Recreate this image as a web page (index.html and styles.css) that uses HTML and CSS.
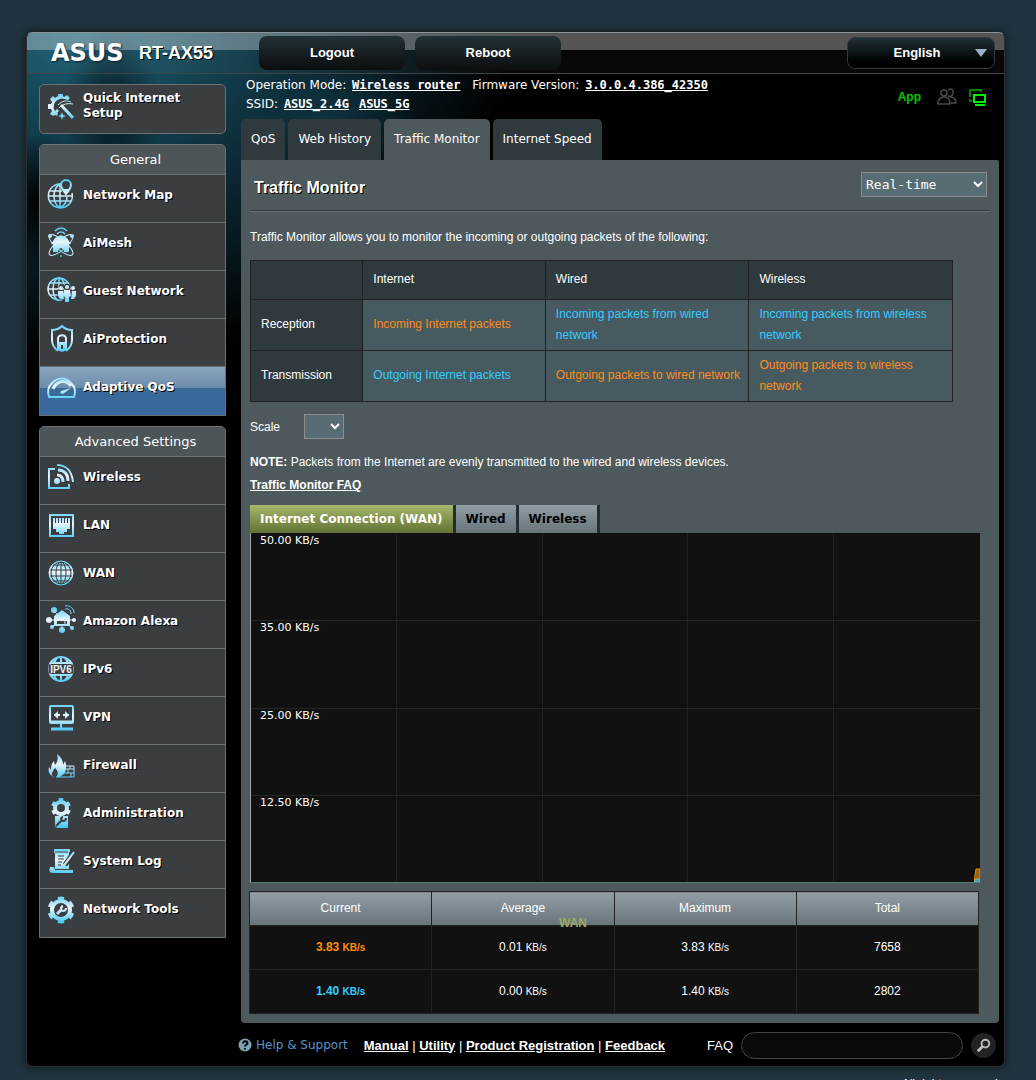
FILE: index.html
```html
<!DOCTYPE html>
<html lang="en">
<head>
  <meta charset="UTF-8" />
  <meta name="viewport" content="width=device-width, initial-scale=1.0" />
  <title>ASUS Wireless Router RT-AX55 - Traffic Monitor</title>
  <link rel="stylesheet" href="styles.css">
</head>
<body>
  <svg class="defs" aria-hidden="true">
    <defs>
      <linearGradient id="ice" gradientUnits="userSpaceOnUse" x1="0" y1="1" x2="0" y2="29">
        <stop offset="0" stop-color="#4cc9f5" />
        <stop offset="0.5" stop-color="#eaf5fb" />
        <stop offset="1" stop-color="#4cc9f5" />
      </linearGradient>
    </defs>
  </svg>

  <div class="container">
    <header class="header">
      <span class="logo">ASUS</span>
      <span class="model">RT-AX55</span>
      <div class="header-buttons">
        <button type="button" class="title-button">Logout</button>
        <button type="button" class="title-button">Reboot</button>
      </div>
      <div class="language">
        <select class="language-select" aria-label="Language">
          <option>English</option>
        </select>
      </div>
    </header>

    <div class="content">
      <nav class="sidebar">
        <a class="quick-setup" href="#">
          <svg class="icon" viewBox="0 0 30 30">
            <path d="M22 9l2-2-3-3-3 2-1-1V3h-5v2L9 7 7 5 4 8l2 3-1 2H2v5h3l1 2-2 3 3 2 2-1 2 1 1-3c-4-2-5-5-4-8 1-5 6-7 10-6z" fill="url(#ice)" />
            <path d="M15 14l12 13" stroke="url(#ice)" stroke-width="3" />
            <path d="M12 14c4-4 8-5 13-3M13 17c4-4 8-5 14-4" fill="none" stroke="url(#ice)" />
            <path d="M16 21l1 3 3 1-3 1-1 3-1-3-3-1 3-1zM11 18l1 1 1 1-1 1-1 1-1-1-1-1 1-1z" fill="url(#ice)" />
          </svg>
          <span>Quick Internet Setup</span>
        </a>

        <div class="menu">
          <div class="menu-title">General</div>
          <a class="menu-item" href="#">
            <svg class="icon line" viewBox="0 0 30 30">
              <path stroke-width="1.500" d="M16 5a12 12 0 1 0 10 9M3 12h13M2 17h25M4 22h22M14 5c-8 5-8 19 0 24M14 5v24M14 29c5-3 7-7 7-11" />
              <path class="hollow" d="M20 15c-4-5-5-7-5-9a5 5 0 0 1 10 0c0 2-1 4-5 9z" />
              <path class="solid" d="M17 10h6l-3 5z" />
            </svg>
            <span>Network Map</span>
          </a>
          <a class="menu-item" href="#">
            <svg class="icon line" viewBox="0 0 30 30">
              <path stroke-width="1.500" d="M9 4c4-4 8-4 12 0M11 7c3-3 5-3 8 0" />
              <ellipse cx="15" cy="18" rx="15" ry="5" transform="rotate(40 15 18)" />
              <ellipse cx="15" cy="18" rx="15" ry="5" transform="rotate(-40 15 18)" />
              <path class="solid" d="M5 17l4-6 6-3 6 3 4 6h-2v8h-5c0-5-6-5-6 0H7v-8z" />
              <circle class="solid" cx="4" cy="9" r="2" />
              <circle class="solid" cx="26" cy="9" r="2" />
              <circle class="solid" cx="15" cy="29" r="1" />
            </svg>
            <span>AiMesh</span>
          </a>
          <a class="menu-item" href="#">
            <svg class="icon line" viewBox="0 0 30 30">
              <g stroke-width="1.500">
                <circle cx="13" cy="14" r="11" />
                <ellipse cx="13" cy="14" rx="6" ry="11" />
                <path d="M13 3v22M2 14h22M4 8h18M4 20h18" />
              </g>
              <g class="cutout">
                <circle cx="15" cy="12" r="2" /><circle cx="21" cy="12" r="3" /><circle cx="27" cy="12" r="2" />
                <path d="M12 15h4v9h-4zM17 15h8v11h-8zM26 15h3v9h-3z" />
              </g>
              <g class="people">
                <circle cx="15" cy="13" r="2" /><circle cx="21" cy="12" r="2" /><circle cx="27" cy="13" r="2" />
                <path d="M12 16h5l1 8h-4l-2-3zM18 15h6l1 6-2 1v5h-4v-5l-2-1zM26 16h4v5l-2 3h-3z" />
              </g>
            </svg>
            <span>Guest Network</span>
          </a>
          <a class="menu-item" href="#">
            <svg class="icon line" viewBox="0 0 30 30">
              <path stroke-width="2" d="M12 28c-4-3-6-6-6-11V7c4 0 7-1 10-4 3 3 6 4 10 4v10c0 5-2 8-6 11" />
              <path stroke-width="2" d="M12 19v-3c0-5 8-5 8 0v3" />
              <path class="solid" fill-rule="evenodd" d="M11 19h10v8l-5 2-5-2zM15 22v4h2v-4z" />
            </svg>
            <span>AiProtection</span>
          </a>
          <a class="menu-item active" href="#">
            <svg class="icon line" viewBox="0 0 30 30">
              <path stroke-width="2" d="M3 26c-2-6 0-11 3-14 6-6 14-6 19 0 4 4 5 9 3 14z" />
              <path stroke-width="3" d="M7 18c4-9 13-10 18-3" />
              <path class="solid" d="M25 17l-8 6-3-1 1-2z" />
            </svg>
            <span>Adaptive QoS</span>
          </a>
        </div>

        <div class="menu">
          <div class="menu-title">Advanced Settings</div>
          <a class="menu-item" href="#">
            <svg class="icon line" viewBox="0 0 30 30">
              <path stroke-width="2" d="M9 8H3v19h20v-4" />
              <path stroke-width="3" d="M12 9c6 0 10 4 10 11M11 14c4 0 6 3 6 7" />
              <path stroke-width="2" d="M11 4c9 0 15 6 16 17" />
              <circle class="solid" cx="11" cy="20" r="3" />
            </svg>
            <span>Wireless</span>
          </a>
          <a class="menu-item" href="#">
            <svg class="icon line" viewBox="0 0 30 30">
              <rect stroke-width="2" x="4" y="6" width="23" height="21" />
              <path class="solid" fill-rule="evenodd" d="M7 9h17v11h-3v3h-3v2h-5v-2h-3v-3H7zM9 9v5h1V9zM12 9v5h1V9zM15 9v5h1V9zM18 9v5h1V9zM21 9v5h1V9z" />
            </svg>
            <span>LAN</span>
          </a>
          <a class="menu-item" href="#">
            <svg class="icon" viewBox="0 0 30 30">
              <circle cx="15" cy="16" r="12" fill="url(#ice)" />
              <g fill="none" stroke="#3a3e40">
                <ellipse cx="15" cy="16" rx="5" ry="11" />
                <ellipse cx="15" cy="16" rx="10" ry="11" />
                <path d="M15 4v24M3 13h24M3 19h24M6 8h18M6 24h18" />
              </g>
              <circle cx="15" cy="16" r="12" fill="none" stroke="url(#ice)" />
            </svg>
            <span>WAN</span>
          </a>
          <a class="menu-item" href="#">
            <svg class="icon line" viewBox="0 0 30 30">
              <path class="solid" fill-rule="evenodd" d="M8 11l8-6 8 6v10H8zM11 16v3h10v-3z" />
              <path d="M3 15h5M23 15h5M8 6l3 3M6 22l4-4M21 19l5 4M16 21v3M19 14v5M19 4c4-1 6 2 6 5M19 1c6-1 9 3 9 7" />
              <circle class="solid" cx="3" cy="15" r="3" />
              <circle class="solid" cx="8" cy="5" r="3" />
              <circle class="solid" cx="28" cy="15" r="2" />
              <circle class="solid" cx="6" cy="22" r="2" />
              <circle class="solid" cx="26" cy="23" r="2" />
              <circle class="solid" cx="16" cy="25" r="3" />
            </svg>
            <span>Amazon Alexa</span>
          </a>
          <a class="menu-item" href="#">
            <svg class="icon line" viewBox="0 0 30 30">
              <circle cx="15" cy="16" r="12" stroke-width="2" />
              <path stroke-width="2" d="M11 5c-2 2-3 4-3 6M19 5c2 2 3 4 3 6M15 4v7M5 10h20M11 27c-2-2-3-4-3-6M19 27c2-2 3-4 3-6M15 28v-7M5 22h20" />
              <rect class="cutout" x="3" y="12" width="24" height="8" />
              <text class="ipv6-text" x="15" y="20">IPV6</text>
            </svg>
            <span>IPv6</span>
          </a>
          <a class="menu-item" href="#">
            <svg class="icon line" viewBox="0 0 30 30">
              <rect stroke-width="2" x="4" y="5" width="23" height="17" rx="1" />
              <path stroke-width="3" d="M5 21h21M5 28h22" />
              <path stroke-width="2" d="M15 22v6M8 14h6M17 14h6" />
              <path class="solid" d="M12 10v8l-4-4zM19 10v8l4-4z" />
            </svg>
            <span>VPN</span>
          </a>
          <a class="menu-item" href="#">
            <svg class="icon line" viewBox="0 0 30 30">
              <path class="solid" fill-rule="evenodd" d="M8 28c-5-2-6-5-5-10l2 3c0-5 1-7 3-9l1 4c3-3 3-7 2-11 5 4 6 7 6 11l2-4c3 8 0 14-6 16h-3c3-3 2-6-1-9-3 4-4 7-2 9z" />
              <path d="M19 17h9v11H10M19 20h9M17 24h11M24 17v3M22 20v4M25 24v4" />
            </svg>
            <span>Firewall</span>
          </a>
          <a class="menu-item" href="#">
            <svg class="icon line" viewBox="0 0 30 30">
              <circle cx="15" cy="11" r="6" stroke-width="4" />
              <circle cx="15" cy="11" r="8" stroke-width="4" pathLength="12" stroke-dasharray="1 1" stroke-dashoffset="-0.5" />
              <path class="solid" d="M9 19h13v12H11l-2-2z" />
              <path class="dark" d="M10 29l6-6" />
              <path class="dark" d="M17 20c-3 1-2 4 0 4s3-1 3-3" />
            </svg>
            <span>Administration</span>
          </a>
          <a class="menu-item" href="#">
            <svg class="icon line" viewBox="0 0 30 30">
              <path class="solid" d="M8 4h16v3h-1v17H9V8H8z" />
              <path class="dark thin" d="M9 7h13M12 11h6M12 14h6M12 17h4M12 20h3" />
              <path class="dark wide" d="M28 7l-9 13" />
              <path stroke-width="2" d="M28 7l-9 12-2 2" />
              <path class="solid" d="M4 22h4l1 3h18v3H7c-4 0-4-3-3-6z" />
            </svg>
            <span>System Log</span>
          </a>
          <a class="menu-item" href="#">
            <svg class="icon line" viewBox="0 0 30 30">
              <circle cx="15" cy="17" r="9" stroke-width="4" />
              <circle cx="15" cy="17" r="11" stroke-width="5" pathLength="12" stroke-dasharray="1 1" stroke-dashoffset="-0.5" />
              <path stroke-width="3" d="M11 21l4-4" />
              <path stroke-width="2" d="M17 13c-3 1-2 5 0 5s3-1 3-3" />
            </svg>
            <span>Network Tools</span>
          </a>
        </div>
      </nav>

      <main class="main">
        <div class="info-bar">
          <div class="info-text">
            <div><span>Operation Mode:</span> <a class="info-link" href="#">Wireless router</a> <span>Firmware Version:</span> <a class="info-link" href="#">3.0.0.4.386_42350</a></div>
            <div><span>SSID:</span> <a class="info-link" href="#">ASUS_2.4G</a><a class="info-link" href="#">ASUS_5G</a></div>
          </div>
          <div class="status">
            <a class="app-link" href="#">App</a>
            <svg class="status-icon" viewBox="0 0 20 18" fill="none" stroke="#4a4a4a" stroke-width="1.500">
              <circle cx="7" cy="5" r="3" />
              <path d="M1 16c0-5 2-7 6-7s6 2 6 7z" />
              <path d="M11 2c2-2 6-1 5 3 0 3-3 4-5 3M13 9c4 0 6 2 6 6h-5" />
            </svg>
            <svg class="status-icon" viewBox="0 0 20 18" fill="none" stroke-width="2">
              <path d="M3 9V2h11v2M3 11v2h2" stroke="#008000" />
              <path d="M7 7h11v7H7zM8 17h10" stroke="#00ee00" />
            </svg>
          </div>
        </div>

        <nav class="tabs">
          <a class="tab" href="#">QoS</a>
          <a class="tab" href="#">Web History</a>
          <a class="tab current" href="#">Traffic Monitor</a>
          <a class="tab" href="#">Internet Speed</a>
        </nav>

        <section class="panel">
          <div class="panel-head">
            <h1>Traffic Monitor</h1>
            <select class="input-option" aria-label="Traffic period">
              <option>Real-time</option>
              <option>Last 24 Hours</option>
              <option>Daily</option>
            </select>
          </div>

          <p class="intro">Traffic Monitor allows you to monitor the incoming or outgoing packets of the following:</p>

          <table class="form-table">
            <colgroup><col class="col-name"><col class="col-internet"><col class="col-link"><col class="col-link"></colgroup>
            <tr>
              <th></th>
              <th>Internet</th>
              <th>Wired</th>
              <th>Wireless</th>
            </tr>
            <tr>
              <th>Reception</th>
              <td class="orange">Incoming Internet packets</td>
              <td class="blue">Incoming packets from wired network</td>
              <td class="blue">Incoming packets from wireless network</td>
            </tr>
            <tr>
              <th>Transmission</th>
              <td class="blue">Outgoing Internet packets</td>
              <td class="orange">Outgoing packets to wired network</td>
              <td class="orange">Outgoing packets to wireless network</td>
            </tr>
          </table>

          <div class="scale">
            <label for="scale">Scale</label>
            <select class="input-option" id="scale">
              <option></option>
            </select>
          </div>

          <p class="note"><b>NOTE:</b> Packets from the Internet are evenly transmitted to the wired and wireless devices.</p>
          <p class="note"><a class="faq-link" href="#">Traffic Monitor FAQ</a></p>

          <div class="graph-tabs">
            <button type="button" class="graph-tab selected">Internet Connection (WAN)</button>
            <button type="button" class="graph-tab">Wired</button>
            <button type="button" class="graph-tab">Wireless</button>
          </div>
          <div class="graph">
            <div class="graph-row">50.00 KB/s</div>
            <div class="graph-row">35.00 KB/s</div>
            <div class="graph-row">25.00 KB/s</div>
            <div class="graph-row">12.50 KB/s</div>
            <svg class="plot" viewBox="0 0 6 14">
              <path d="M0 14L2 1h4v13z" fill="#a65c00" stroke="#f08a10" />
              <path d="M0 14l2-3h4v3z" fill="#4f9c9c" stroke="#5fc4c4" />
            </svg>
          </div>

          <div class="stats-wrap">
            <table class="stats">
              <thead>
                <tr><th>Current</th><th>Average</th><th>Maximum</th><th>Total</th></tr>
              </thead>
              <tbody>
                <tr>
                  <td class="rx">3.83 <small>KB/s</small></td>
                  <td>0.01 <small>KB/s</small></td>
                  <td>3.83 <small>KB/s</small></td>
                  <td>7658</td>
                </tr>
                <tr>
                  <td class="tx">1.40 <small>KB/s</small></td>
                  <td>0.00 <small>KB/s</small></td>
                  <td>1.40 <small>KB/s</small></td>
                  <td>2802</td>
                </tr>
              </tbody>
            </table>
            <span class="wan-label">WAN</span>
          </div>
        </section>

        <footer class="footer">
          <svg class="help-icon" viewBox="0 0 14 14">
            <circle cx="7" cy="7" r="6.500" fill="#7da0b3" />
            <path d="M5 5.500c0-3 4.500-3 4.500-.500C9.500 7 7 6.500 7 8.500M7 10v1.500" fill="none" stroke="#000" stroke-width="2" />
          </svg>
          <span class="help-title">Help &amp; Support</span>
          <span class="footer-links"><a href="#">Manual</a> | <a href="#">Utility</a> | <a href="#">Product Registration</a> | <a href="#">Feedback</a></span>
          <form class="search">
            <label for="faq">FAQ</label>
            <input type="text" id="faq">
            <button type="button" class="search-button" aria-label="Search">
              <svg viewBox="0 0 26 26" fill="none" stroke="#bbb">
                <circle cx="15" cy="11" r="4" stroke-width="2" />
                <path d="M12 14l-5 5" stroke-width="3" />
              </svg>
            </button>
          </form>
        </footer>
      </main>
    </div>
  </div>
  <div class="copyright">All rights reserved.</div>
</body>
</html>
```
FILE: styles.css
```css
* {
  box-sizing: border-box;
}
body {
  margin: 0;
  padding: 32px 31px 0 26px;
  background: #21333e;
  color: #fff;
  font-family: "Liberation Sans", Arial, sans-serif;
  font-size: 12px;
}
a {
  color: #fff;
}
select, button, input {
  font-family: inherit;
  margin: 0;
}
.defs {
  position: absolute;
  width: 0;
  height: 0;
}
.container {
  border: 1px solid #2c3033;
  border-top-color: #8b9599;
  border-radius: 6px;
  background:
    radial-gradient(ellipse 50px 90px at 85px 80px, rgba(5, 14, 20, 0.8), transparent),
    radial-gradient(ellipse 60px 70px at 15px 170px, #000, transparent),
    radial-gradient(ellipse 90px 60px at 300px 80px, rgba(16, 56, 70, 0.7), transparent),
    radial-gradient(ellipse 430px 330px at 60px 0, #1b6075, #0d2c37 50%, transparent),
    #000;
  box-shadow: 0 0 8px #0c1418;
}

/* header */
.header {
  display: flex;
  align-items: center;
  height: 41px;
  padding: 0 9px 0 24px;
  border-bottom: 1px solid #3d4549;
  border-radius: 5px 5px 0 0;
  background: linear-gradient(rgba(255, 255, 255, 0.33) 17px, rgba(255, 255, 255, 0.03) 17px);
}
.logo {
  width: 88px;
  font: bold 24px/40px "DejaVu Sans", Verdana, sans-serif;
  text-shadow: 1px 1px 2px #123;
}
.model {
  width: 120px;
  font-size: 18px;
  font-weight: bold;
  text-shadow: 1px 1px 0 #000;
}
.header-buttons {
  display: flex;
  gap: 10px;
  flex: 1;
}
.title-button {
  width: 146px;
  height: 34px;
  border: none;
  border-radius: 8px;
  background: linear-gradient(#213136, #0c0e0f);
  color: #fff;
  font-size: 13px;
  font-weight: bold;
  padding: 0 0 2px;
}
.language {
  position: relative;
}
.language::after {
  content: "";
  position: absolute;
  right: 8px;
  top: 12px;
  border: 6px solid transparent;
  border-top: 8px solid #9db2c8;
  border-bottom: 0;
  pointer-events: none;
}
.language-select {
  appearance: none;
  display: block;
  width: 148px;
  height: 32px;
  padding: 0 8px 2px 0;
  border: 1px solid #34393b;
  border-radius: 8px;
  background: linear-gradient(#213136, #000 80%);
  color: #fff;
  font-size: 13px;
  font-weight: bold;
  text-align: center;
  text-align-last: center;
}

/* left menu */
.content {
  display: flex;
  gap: 15px;
  padding: 0 5px 0 12px;
}
.sidebar {
  width: 187px;
  padding-top: 10px;
  flex-shrink: 0;
  font: bold 12px/15px "DejaVu Sans", Verdana, sans-serif;
}
.sidebar a {
  display: flex;
  gap: 7px;
  color: #fff;
  text-decoration: none;
  text-shadow: 1px 1px 0 #000;
}
.quick-setup {
  height: 50px;
  margin-bottom: 10px;
  padding: 6px 20px 0 6px;
  border: 1px solid #6b7071;
  border-radius: 5px;
  background: #3a3e40;
}
.menu {
  margin-bottom: 10px;
  border: 1px solid #6b7071;
  border-radius: 5px 5px 0 0;
  background: #3a3e40;
}
.menu-title {
  height: 29px;
  padding-left: 6px;
  border-radius: 4px 4px 0 0;
  background: #4d5558;
  font-size: 13px;
  font-weight: normal;
  line-height: 30px;
  text-align: center;
}
.menu-item {
  height: 48px;
  padding: 4px 0 0 6px;
  border-top: 1px solid #6b7071;
  line-height: 33px;
}
.menu-item:last-child {
  height: 49px;
}
.menu-item.active {
  background: linear-gradient(#8aa5bf, #6d8bab 21px, #3a6a9a 21px, #37699a);
}
.icon {
  flex: none;
  width: 30px;
  height: 30px;
  overflow: visible;
}
.line {
  fill: none;
  stroke: url(#ice);
}
.line .solid, .line .people {
  fill: url(#ice);
  stroke: none;
}
.line .hollow {
  fill: #3a3e40;
  stroke-width: 2px;
}
.line .cutout {
  fill: #3a3e40;
  stroke: #3a3e40;
}
.line .dark {
  stroke: #3a3e40;
  stroke-width: 2px;
}
.line .thin {
  stroke-width: 1px;
}
.line .wide {
  stroke-width: 5px;
}
.ipv6-text {
  fill: #eaf5fb;
  stroke: none;
  font: bold 10px "Liberation Sans", Arial, sans-serif;
  text-anchor: middle;
  text-shadow: none;
}

/* operation mode, SSID */
.main {
  flex: 1;
  min-width: 0;
}
.info-bar {
  display: flex;
  justify-content: space-between;
  height: 45px;
  padding: 2px 12px 0 5px;
  font: 12px/19px "DejaVu Sans", Verdana, sans-serif;
}
.info-link {
  font-family: "DejaVu Sans Mono", monospace;
  font-weight: bold;
  margin: 0 8px 0 2px;
}
.status {
  display: flex;
  align-items: center;
  gap: 16px;
  padding-bottom: 2px;
}
.status-icon {
  width: 20px;
  height: 18px;
}
.status-icon + .status-icon {
  margin-left: -6px;
}
.app-link {
  color: #00c800;
  font: bold 12px "Liberation Sans", Arial, sans-serif;
  text-decoration: none;
}
.tabs {
  display: flex;
  gap: 3px;
}
.tab {
  height: 41px;
  padding: 0 10px;
  border-radius: 5px 5px 0 0;
  background: #2f3a3e;
  font: 12px/40px "DejaVu Sans", Verdana, sans-serif;
  text-decoration: none;
}
.tab.current {
  background: #4d595d;
}

/* page body */
.panel {
  padding: 12px 9px 9px;
  border-radius: 0 2px 4px 4px;
  background: #4d595d;
}
.panel-head {
  display: flex;
  justify-content: space-between;
  height: 39px;
  padding: 0 3px 0 4px;
  border-bottom: 1px solid #2e393d;
  box-shadow: 0 1px 0 #6a7478;
}
.panel-head h1 {
  margin: 0;
  font-size: 16px;
  line-height: 31px;
  text-shadow: 1px 1px 0 #000;
}
.input-option {
  width: 126px;
  height: 25px;
  border: 1px solid #8c8c8c;
  border-radius: 0;
  background: #576d73;
  color: #fff;
  font: 13px "DejaVu Sans Mono", monospace;
}
.intro {
  margin: 16px 0 13px;
  line-height: 20px;
}
.form-table {
  width: 95%;
  border-collapse: collapse;
  table-layout: fixed;
  line-height: 21px;
}
.col-name {
  width: 16%;
}
.col-internet {
  width: 26%;
}
.col-link {
  width: 29%;
}
.form-table th, .form-table td {
  height: 51px;
  padding: 3px 0 4px 10px;
  border: 1px solid #222;
  background: #475a5f;
  text-align: left;
  font-weight: normal;
}
.form-table th {
  background: #2f3a3e;
}
.form-table tr:first-child th {
  height: 39px;
}
.form-table .orange {
  color: #fc8c1c;
}
.form-table .blue {
  color: #33ccff;
}
.scale {
  display: flex;
  align-items: center;
  gap: 24px;
  margin: 12px 0;
}
.scale .input-option {
  width: 40px;
}
.note {
  margin: 0;
  line-height: 23px;
}
.faq-link {
  font-weight: bold;
}

/* graph */
.graph-tabs {
  display: flex;
  margin-top: 8px;
}
.graph-tab {
  height: 28px;
  padding: 0 10px 1px;
  border: none;
  border-right: 3px solid #222e35;
  background: linear-gradient(#919ea4, #67757b);
  color: #000;
  font: bold 12px "DejaVu Sans", Verdana, sans-serif;
}
.graph-tab.selected {
  background: linear-gradient(#a6b76b, #637233);
  color: #fff;
}
.graph {
  position: relative;
  display: grid;
  grid-template-rows: repeat(4, 1fr);
  height: 350px;
  margin-right: 10px;
  border-left: 1px solid #aaa;
  border-bottom: 1px solid #4e8074;
  background:
    linear-gradient(to left, #111 4px, transparent 4px),
    repeating-linear-gradient(to right, #111 0, #111 calc(20% - 1px), #202020 calc(20% - 1px), #202020 20%);
}
.graph-row {
  padding-left: 9px;
  font: 11px/15px "DejaVu Sans", Verdana, sans-serif;
}
.graph-row + .graph-row {
  border-top: 1px solid #252525;
  line-height: 14px;
}
.plot {
  position: absolute;
  right: 0;
  bottom: 0;
  width: 6px;
  height: 14px;
}
.stats-wrap {
  position: relative;
  margin: 8px 11px 0 -1px;
}
.stats {
  width: 100%;
  border-collapse: collapse;
  table-layout: fixed;
  background: #111;
  text-align: center;
}
.stats th {
  height: 34px;
  padding: 0 0 2px;
  border: 1px solid #222;
  font-weight: normal;
  background: linear-gradient(#919ea4, #67757b);
}
.stats td {
  height: 44px;
  padding: 0 0 2px;
  border: 1px solid #222;
}
.stats small {
  font-size: 10px;
}
.rx {
  color: #ff9000;
  font-weight: bold;
}
.tx {
  color: #33ccff;
  font-weight: bold;
}
.wan-label {
  position: absolute;
  left: 310px;
  top: 25px;
  color: #9aaa62;
  font-weight: bold;
}

/* footer */
.footer {
  display: flex;
  align-items: center;
  height: 43px;
  padding-top: 1px;
  font-size: 13px;
}
.help-icon {
  width: 14px;
  height: 14px;
  margin: 0 4px 0 -3px;
}
.help-title {
  color: #5a94c8;
  font: 12px "DejaVu Sans", Verdana, sans-serif;
}
.footer-links {
  margin-left: 16px;
}
.footer-links a {
  font-weight: bold;
}
.search {
  display: flex;
  align-items: center;
  gap: 8px;
  margin: 0 3px 0 auto;
}
.search input {
  width: 222px;
  height: 27px;
  padding: 0 12px;
  border: 1px solid #444;
  border-radius: 14px;
  background: #0a0a0a;
  color: #fff;
}
.search-button {
  width: 25px;
  height: 25px;
  padding: 0;
  border: none;
  border-radius: 50%;
  background: #222;
}
.search-button svg {
  display: block;
}
.copyright {
  padding: 10px 4px 0 0;
  text-align: right;
}
```
